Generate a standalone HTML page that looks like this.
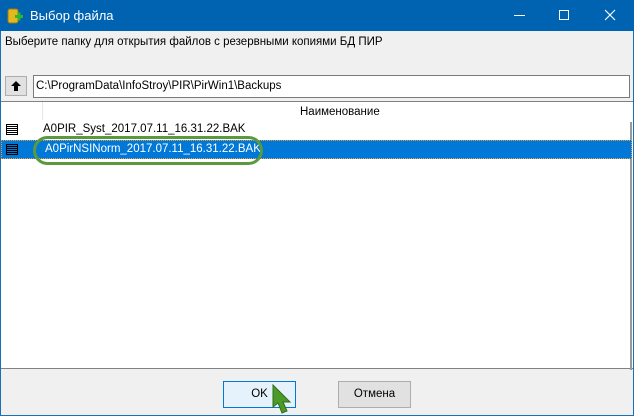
<!DOCTYPE html>
<html><head><style>
*{margin:0;padding:0;box-sizing:border-box}
body{width:634px;height:416px;background:#f0f0f0;font-family:"Liberation Sans",sans-serif;font-size:11.5px;position:relative;overflow:hidden}
.a{position:absolute}
</style></head><body>
<div class="a" style="left:0;top:0;width:634px;height:416px;border:1px solid #1a6fba"></div>
<div class="a" style="left:0;top:0;width:634px;height:31px;background:#0063b1;color:#fff">
 <svg class="a" style="left:6px;top:7px" width="18" height="18"><rect x="2" y="2" width="10" height="14" rx="2" fill="#e6b820" stroke="#9a7a10"/><rect x="9" y="8" width="8" height="3" fill="#2fb52f"/><rect x="11.5" y="5.5" width="3" height="8" fill="#2fb52f"/></svg>
 <div class="a" style="left:30px;top:8px;font-size:13px">Выбор файла</div>
 <div class="a" style="left:514px;top:15px;width:11px;height:1px;background:#fff"></div>
 <div class="a" style="left:559px;top:10px;width:10px;height:10px;border:1px solid #fff"></div>
 <svg class="a" style="left:604px;top:9px" width="12" height="12"><path d="M1 1L11 11M11 1L1 11" stroke="#fff" stroke-width="1.2"/></svg>
</div>
<div class="a" style="left:5px;top:36px">Выберите папку для открытия файлов с резервными копиями БД ПИР</div>
<div class="a" style="left:5px;top:76px;width:22px;height:20px;background:#e1e1e1;border:1px solid #adadad"></div>
<svg class="a" style="left:10px;top:80px" width="12" height="12"><path d="M6 1L1 6H4V11H8V6H11Z" fill="#000"/></svg>
<div class="a" style="left:33px;top:75px;width:597px;height:23px;background:#fff;border:1px solid #7a7a7a;padding:4px 2px">C:\ProgramData\InfoStroy\PIR\PirWin1\Backups</div>
<div class="a" style="left:1px;top:101px;width:632px;height:268px;background:#fff;border-top:1px solid #828282;border-bottom:1px solid #828282">
 <div class="a" style="left:41px;top:0;width:1px;height:18px;background:#e5e5e5"></div>
 <div class="a" style="left:299px;top:4px">Наименование</div>
 <div class="a" style="left:629px;top:20px;width:2px;height:248px;background:#999"></div>
 <div class="a" style="left:5px;top:22px;width:12px;height:11px;border:1px solid #000;background:repeating-linear-gradient(#fff 0 1px,#000 1px 2px)"></div>
 <div class="a" style="left:42px;top:21px">A0PIR_Syst_2017.07.11_16.31.22.BAK</div>
 <div class="a" style="left:0;top:38px;width:631px;height:19px;background:#0078d7;border:1px dotted #e8a040"></div>
 <div class="a" style="left:5px;top:42px;width:12px;height:11px;border:1px solid #000;background:repeating-linear-gradient(#0078d7 0 1px,#000 1px 2px)"></div>
 <div class="a" style="left:44px;top:41px;color:#fff">A0PirNSINorm_2017.07.11_16.31.22.BAK</div>
 <div class="a" style="left:32px;top:34px;width:230px;height:29px;border:3px solid #5a9a3c;border-radius:15px"></div>
</div>
<div class="a" style="left:223px;top:381px;width:73px;height:27px;background:#e5f1fb;border:1px solid #0078d7;text-align:center;line-height:25px">OK</div>
<div class="a" style="left:338px;top:381px;width:73px;height:27px;background:#e1e1e1;border:1px solid #adadad;text-align:center;line-height:25px">Отмена</div>
<svg class="a" style="left:270px;top:384px" width="26" height="32"><path d="M3 1L3 23L8 19L12 29L17 27L13 18L20 18Z" fill="#4c9a2a" stroke="#2e6e18"/></svg>
</body></html>
